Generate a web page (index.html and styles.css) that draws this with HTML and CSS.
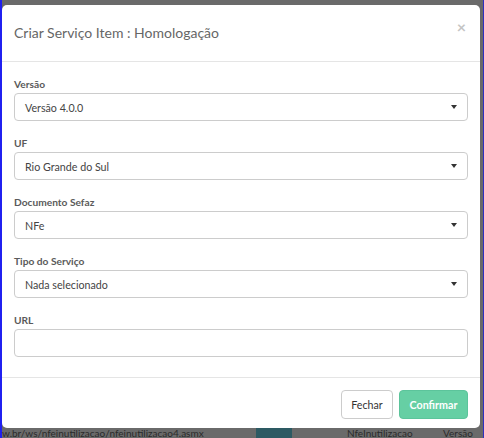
FILE: index.html
```html
<!DOCTYPE html>
<html lang="pt-BR">
<head>
<meta charset="utf-8">
<title>Criar Serviço Item</title>
<link rel="stylesheet" href="styles.css">
</head>
<body>
<div class="screen">
  <div class="modal">
    <div class="modal-header">
      <h4 class="modal-title">Criar Serviço Item : Homologação</h4>
      <span class="close">×</span>
    </div>
    <div class="modal-body">
      <div class="group">
        <label class="lbl">Versão</label>
        <div class="select"><span>Versão 4.0.0</span><span class="caret"></span></div>
      </div>
      <div class="group">
        <label class="lbl">UF</label>
        <div class="select"><span>Rio Grande do Sul</span><span class="caret"></span></div>
      </div>
      <div class="group">
        <label class="lbl">Documento Sefaz</label>
        <div class="select"><span>NFe</span><span class="caret"></span></div>
      </div>
      <div class="group">
        <label class="lbl">Tipo do Serviço</label>
        <div class="select"><span>Nada selecionado</span><span class="caret"></span></div>
      </div>
      <div class="group">
        <label class="lbl">URL</label>
        <div class="input"></div>
      </div>
    </div>
    <div class="modal-footer">
      <button class="btn btn-default">Fechar</button>
      <button class="btn btn-success">Confirmar</button>
    </div>
  </div>
  <div class="behind">
    <span class="b-url">w.br/ws/nfeinutilizacao/nfeinutilizacao4.asmx</span>
    <span class="b-btn"></span>
    <span class="b-name">NfeInutilizacao</span>
    <span class="b-ver">Versão</span>
  </div>
</div>
</body>
</html>
```
FILE: styles.css
```css
* { box-sizing: border-box; }
html, body { margin: 0; padding: 0; }
body {
  width: 484px;
  height: 438px;
  overflow: hidden;
  background: #6b6b6b;
  font-family: Lato, "Open Sans", sans-serif;
}
.screen {
  width: 484px;
  height: 438px;
  border-left: 2px solid #2020f0;
  border-right: 1px solid #3030c0;
  background: #6a6a6a;
  display: flex;
  flex-direction: column;
  padding-top: 5px;
}
.modal {
  width: 478px;
  background: #fff;
  border-radius: 5px;
  height: 423px;
  flex: none;
}
.modal-header {
  height: 57px;
  border-bottom: 1px solid #e5e5e5;
  display: flex;
  justify-content: space-between;
  padding: 19px 12px 0 12px;
}
.modal-title {
  margin: 0;
  font-weight: 400;
  font-size: 14px;
  color: #666;
  line-height: 18px;
}
.close {
  color: #c4c4c4;
  font-size: 16px;
  line-height: 12px;
  font-weight: 700;
  margin-top: -3px;
  margin-right: 2px;
}
.modal-body {
  padding: 15px 12px 0 12px;
  height: 316px;
  border-bottom: 1px solid #e5e5e5;
}
.group {
  margin-bottom: 15px;
}
.lbl {
  display: block;
  font-size: 10.2px;
  font-weight: 700;
  color: #5a5a5a;
  line-height: 14px;
  margin-bottom: 2px;
}
.select, .input {
  height: 28px;
  border: 1px solid #ccc;
  border-radius: 4px;
  display: flex;
  align-items: center;
  justify-content: space-between;
  padding: 0 10px 0 10px;
  font-size: 10.7px;
  color: #444;
}
.caret {
  width: 0;
  height: 0;
  border-left: 3.5px solid transparent;
  border-right: 3.5px solid transparent;
  border-top: 4px solid #333;
}
.modal-footer {
  display: flex;
  justify-content: flex-end;
  gap: 6px;
  padding: 12px 12px 0 12px;
}
.btn {
  height: 29px;
  border-radius: 4px;
  font-family: Lato, "Open Sans", sans-serif;
  font-size: 10.7px;
  padding: 0;
}
.btn-default {
  width: 52px;
  background: #fff;
  border: 1px solid #ccc;
  color: #333;
}
.btn-success {
  width: 69px;
  background: #66cfa4;
  border: 1px solid #5cc49b;
  color: #fff;
  font-weight: 700;
}
.behind {
  display: flex;
  align-items: flex-start;
  height: 10px;
  margin-top: 0;
  font-size: 10px;
  line-height: 10px;
  color: #2a2a2a;
}
.b-url { width: 254px; white-space: nowrap; }
.b-btn { width: 36px; height: 10px; background: #2d5a63; margin-right: 55px; }
.b-name { width: 96px; }
```
